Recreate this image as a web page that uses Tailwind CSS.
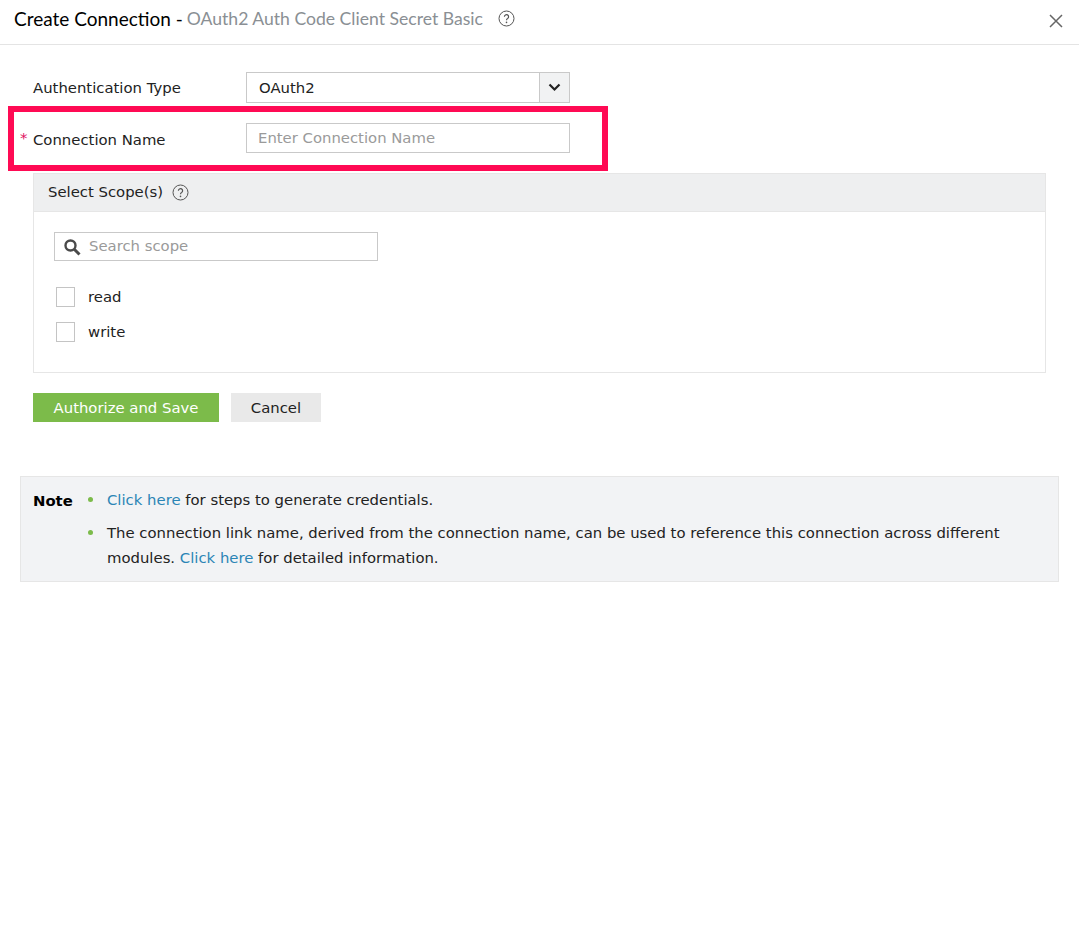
<!DOCTYPE html>
<html lang="en">
<head>
  <meta charset="UTF-8">
  <title>Create Connection</title>
  <script src="https://cdn.jsdelivr.net/npm/@tailwindcss/browser@4"></script>
</head>
<body class="bg-white text-[14.85px] text-[#222] font-['DejaVu_Sans','Liberation_Sans',sans-serif]">
  <div class="relative h-[942px] overflow-hidden">
    <!-- header -->
    <div class="flex items-center h-[45px] pb-[6px] pl-[14px] pr-[16px] border-b border-[#e4e4e4] font-['Lato',sans-serif]">
      <span class="text-[19px] text-black">Create Connection -</span>
      <span class="text-[17.6px] text-[#8a8f94] ml-[4px]">OAuth2 Auth Code Client Secret Basic</span>
      <svg class="ml-[15px] w-[17px] h-[17px] mb-[1px]" viewBox="0 0 17 17" fill="none" stroke="#555"><circle cx="8.5" cy="8.5" r="7.5"/><path d="M6.4 6.7a2.1 2.1 0 1 1 3.2 1.8c-.7.4-1.1.8-1.1 1.7" stroke-width="1.2"/><circle cx="8.5" cy="12.4" r=".8" fill="#555" stroke="none"/></svg>
      <svg class="ml-auto mt-[4px] w-[14px] h-[14px]" viewBox="0 0 14 14" stroke="#666" stroke-width="1.5"><path d="M1 1l12 12M13 1L1 13"/></svg>
    </div>

    <div class="px-[33px] pt-[27px]">
      <!-- auth type -->
      <div class="flex items-center h-[31px]">
        <label class="w-[213px] pt-[2px]">Authentication Type</label>
        <div class="flex w-[324px] h-[31px] border border-[#c9c9c9]">
          <span class="flex-1 pl-[12px] leading-[31px]">OAuth2</span>
          <span class="flex items-center justify-center w-[30px] bg-[#f1f2f3] border-l border-[#c9c9c9]">
            <svg class="w-[13px] h-[9px]" viewBox="0 0 13 9" fill="none" stroke="#222" stroke-width="2.2"><path d="M1.5 1.5l5 5 5-5"/></svg>
          </span>
        </div>
      </div>
      <!-- connection name -->
      <div class="flex items-center h-[30px] mt-[20px]">
        <label class="relative w-[213px] mt-[5px]"><span class="absolute left-[-13px] top-[-2px] text-[#e0115f]">*</span>Connection Name</label>
        <div class="w-[324px] h-[30px] border border-[#c9c9c9] pl-[11px] leading-[28px] text-[#9a9a9a]">Enter Connection Name</div>
      </div>
      <!-- scopes -->
      <div class="w-[1013px] h-[200px] mt-[20px] border border-[#e6e6e6]">
        <div class="flex items-center gap-[9px] h-[38px] pl-[14px] bg-[#eeeff0] border-b border-[#e6e6e6]">
          <span>Select Scope(s)</span>
          <svg class="w-[17px] h-[17px]" viewBox="0 0 17 17" fill="none" stroke="#555"><circle cx="8.5" cy="8.5" r="7.5"/><path d="M6.4 6.7a2.1 2.1 0 1 1 3.2 1.8c-.7.4-1.1.8-1.1 1.7" stroke-width="1.2"/><circle cx="8.5" cy="12.4" r=".8" fill="#555" stroke="none"/></svg>
        </div>
        <div class="pl-[20px] pt-[20px]">
          <div class="flex items-center w-[324px] h-[29px] border border-[#c9c9c9] pl-[8px]">
            <svg class="w-[18px] h-[18px]" viewBox="0 0 18 18" fill="none" stroke="#4a4a4a"><circle cx="7.5" cy="7.5" r="5" stroke-width="2.4"/><path d="M11.5 11.5l5 5" stroke-width="3"/></svg>
            <span class="ml-[8px] text-[#9a9a9a]">Search scope</span>
          </div>
          <div class="flex items-center mt-[26px] h-[20px] pl-[2px]">
            <span class="w-[19px] h-[20px] border border-[#c4c4c4]"></span>
            <span class="ml-[13px]">read</span>
          </div>
          <div class="flex items-center mt-[15px] h-[20px] pl-[2px]">
            <span class="w-[19px] h-[20px] border border-[#c4c4c4]"></span>
            <span class="ml-[13px]">write</span>
          </div>
        </div>
      </div>
      <!-- buttons -->
      <div class="flex gap-[12px] mt-[20px]">
        <button class="w-[186px] h-[29px] pt-[2px] bg-[#7cbb4a] text-white font-medium">Authorize and Save</button>
        <button class="w-[90px] h-[29px] pt-[2px] bg-[#e9e9e9] text-[#222]">Cancel</button>
      </div>
    </div>

    <!-- note -->
    <div class="flex mx-[20px] mt-[54px] w-[1039px] h-[106px] bg-[#f2f3f5] border border-[#e6e6e6] pl-[12px] pt-[11px]">
      <span class="font-bold text-black w-[54px] mt-[2px]">Note</span>
      <ul class="flex-1 pr-[30px]">
        <li class="flex leading-[25px]">
          <span class="w-[5px] h-[5px] mt-[9px] ml-[1px] rounded-full bg-[#7cbb4a]"></span>
          <span class="ml-[14px]"><a class="text-[#2b85b5]">Click here</a> for steps to generate credentials.</span>
        </li>
        <li class="flex leading-[25px] mt-[8px]">
          <span class="shrink-0 w-[5px] h-[5px] mt-[9px] ml-[1px] rounded-full bg-[#7cbb4a]"></span>
          <span class="ml-[14px]">The connection link name, derived from the connection name, can be used to reference this connection across different modules. <a class="text-[#2b85b5]">Click here</a> for detailed information.</span>
        </li>
      </ul>
    </div>

    <!-- annotation box -->
    <div class="absolute left-[8px] top-[106px] w-[600px] h-[65px] border-[6px] border-[#ff0a54]"></div>
  </div>
</body>
</html>
